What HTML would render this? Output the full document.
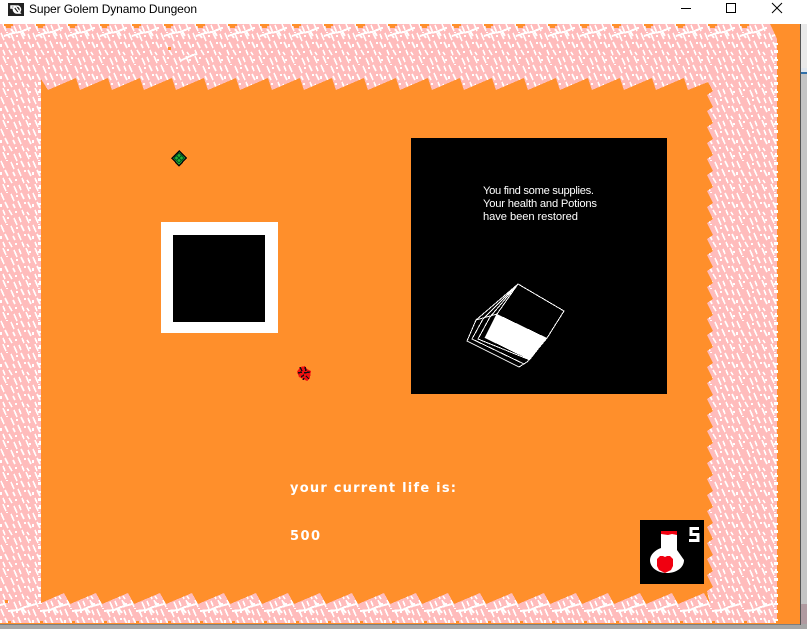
<!DOCTYPE html>
<html><head><meta charset="utf-8"><style>
html,body{margin:0;padding:0;background:#fff;width:807px;height:629px;overflow:hidden}
svg{display:block}
</style></head><body>
<svg width="807" height="629" viewBox="0 0 807 629" xmlns="http://www.w3.org/2000/svg">
<defs>
<pattern id="p" width="32" height="32" patternUnits="userSpaceOnUse" x="0" y="24">
<rect width="32" height="32" fill="#ffbcbc"/>
<path shape-rendering="crispEdges" stroke="#fff" stroke-width="1.6" fill="none" d="M3 0l3 7M8 1v2M14 2l3 7M19 1l2 5M26 0l3 7M30 3v2M1 9l3 7M7 8v1M11 10l3 7M17 11v2M21 9l3 6M28 10l2 5M5 18l3 6M1 20v3M13 20l2 4M18 17l3 7M25 18v2M28 18l3 6M3 26l2 5M9 26l3 5M16 27v2M22 26l2 5M27 28l2 3"/>
</pattern>
<pattern id="t" width="32" height="16" patternUnits="userSpaceOnUse" x="2" y="25">
<path shape-rendering="crispEdges" stroke="#fff" stroke-width="2" fill="none" d="M2 11l9 -3 7 -1 10 -4M12 8l-3 -4M20 6l3 5M6 10l2 3"/>
</pattern>
<pattern id="u" width="32" height="14" patternUnits="userSpaceOnUse" x="8" y="600">
<path shape-rendering="crispEdges" stroke="#fff" stroke-width="2" fill="none" d="M0 11l10 -1 7 -3 11 -3M14 8l4 5M22 5l-3 -3M6 10l-3 3"/>
</pattern>
<pattern id="e" width="8" height="16" patternUnits="userSpaceOnUse" x="0" y="24">
<path shape-rendering="crispEdges" fill="#fff" d="M0 3h8v2h-8zM0 10h8v3h-8z"/>
</pattern>
</defs>

<rect width="807" height="629" fill="#fff"/>
<rect x="801" y="24" width="6" height="44" fill="#e9e9e9"/>
<rect x="801" y="68" width="6" height="4" fill="#dfe6ee"/>
<rect x="801" y="72" width="6" height="2" fill="#2f6fa8"/>
<rect x="801" y="74" width="6" height="530" fill="#c4c4c4"/>
<rect x="801" y="604" width="6" height="25" fill="#b09aa0"/>
<rect x="0" y="624" width="807" height="5" fill="#a6a6a6"/>
<rect x="0" y="623" width="801" height="1.5" fill="#555"/>
<rect x="800" y="24" width="1" height="601" fill="#555"/>

<!-- title bar -->
<rect x="8" y="3" width="16" height="13" fill="#222"/>
<path d="M11 6h4l5 7h-3l-4 -5h-2zM17 6a3.500 3.500 0 1 1 -.1 0" fill="none" stroke="#fff" stroke-width="1.500"/>
<text x="29" y="13" font-family="'Liberation Sans',sans-serif" font-size="12" fill="#000" textLength="168" lengthAdjust="spacing">Super Golem Dynamo Dungeon</text>
<path d="M681 8.500h10" stroke="#000" fill="none"/>
<rect x="726.500" y="3.500" width="9" height="9" fill="none" stroke="#000"/>
<path d="M772 3l10 10M782 3l-10 10" stroke="#000" fill="none"/>

<!-- orange window background -->
<rect x="0" y="24" width="800" height="600" fill="#ff8f2b"/>

<!-- frame -->
<rect x="0" y="24" width="777" height="599" fill="url(#p)"/>
<rect x="0" y="25" width="777" height="16" fill="url(#t)"/>
<rect x="0" y="600" width="777" height="14" fill="url(#u)"/>
<rect x="774" y="40" width="4" height="583" fill="url(#e)"/>
<path d="M180 61l6 -3 7 -3 4 -1" stroke="#fff" stroke-width="2" fill="none" shape-rendering="crispEdges"/>

<!-- notches -->
<line x1="4" x2="777" y1="25" y2="25" stroke="#ff8f2b" stroke-width="2" stroke-dasharray="9 23" shape-rendering="crispEdges"/>
<line x1="6" x2="777" y1="27" y2="27" stroke="#ff8f2b" stroke-width="2" stroke-dasharray="5 27" shape-rendering="crispEdges"/>
<line x1="8" x2="777" y1="622" y2="622" stroke="#ff8f2b" stroke-width="2" stroke-dasharray="3 29" shape-rendering="crispEdges"/>
<path d="M770 24L778 41V24Z" fill="#ff8f2b"/>
<rect x="168" y="47" width="3" height="3" fill="#ff8f2b"/>
<rect x="5" y="600" width="3" height="3" fill="#ff8f2b"/>

<!-- interior -->
<rect x="38" y="80" width="4" height="524" fill="url(#e)"/>
<path fill="#ff8f2b" shape-rendering="crispEdges" d="M41 79L48 90
l28 -12 4 12 l28 -12 4 12 l28 -12 4 12 l28 -12 4 12 l28 -12 4 12 l28 -12 4 12 l28 -12 4 12 l28 -12 4 12 l28 -12 4 12 l28 -12 4 12
l28 -12 4 12 l28 -12 4 12 l28 -12 4 12 l28 -12 4 12 l28 -12 4 12 l28 -12 4 12 l28 -12 4 12 l28 -12 4 12 l28 -12 4 12 l28 -12 4 12
l20 -8 5 9
l-6 4 6 12 l-6 4 6 12 l-6 4 6 12 l-6 4 6 12 l-6 4 6 12 l-6 4 6 12 l-6 4 6 12 l-6 4 6 12 l-6 4 6 12 l-6 4 6 12
l-6 4 6 12 l-6 4 6 12 l-6 4 6 12 l-6 4 6 12 l-6 4 6 12 l-6 4 6 12 l-6 4 6 12 l-6 4 6 12 l-6 4 6 12 l-6 4 6 12
l-6 4 6 12 l-6 4 6 12 l-6 4 6 12 l-6 4 6 12 l-6 4 6 12 l-6 4 6 12 l-6 4 6 12 l-6 4 6 12 l-6 4 6 12 l-6 4 6 12 l-6 4 6 12
l-6 4 L710 604
l-6 -11 -26 11 l-6 -11 -26 11 l-6 -11 -26 11 l-6 -11 -26 11 l-6 -11 -26 11 l-6 -11 -26 11 l-6 -11 -26 11 l-6 -11 -26 11 l-6 -11 -26 11 l-6 -11 -26 11
l-6 -11 -26 11 l-6 -11 -26 11 l-6 -11 -26 11 l-6 -11 -26 11 l-6 -11 -26 11 l-6 -11 -26 11 l-6 -11 -26 11 l-6 -11 -26 11 l-6 -11 -26 11 l-6 -11 -26 11
l-6 -11 L41 603Z"/>

<!-- white square -->
<rect x="161" y="222" width="117" height="111" fill="#fff"/>
<rect x="173" y="235" width="92" height="87" fill="#000"/>

<!-- panel -->
<rect x="411" y="138" width="256" height="256" fill="#000"/>
<g font-family="'Liberation Sans',sans-serif" font-size="11.2" fill="#fff">
<text x="483" y="194" textLength="111" lengthAdjust="spacing">You find some supplies.</text>
<text x="483" y="207" textLength="114" lengthAdjust="spacing">Your health and Potions</text>
<text x="483" y="220" textLength="95" lengthAdjust="spacing">have been restored</text>
</g>
<polygon points="497,314 547,338 530,360 485,338" fill="#fff" shape-rendering="crispEdges"/>
<g fill="none" stroke="#fff" stroke-width="1" shape-rendering="crispEdges">
<path d="M518 284L564 311L547 338M518 284L476 320L467 341L519 367L527 362L547 338"/>
<path d="M518 284L483 319M518 284L490 317M518 284L497 314"/>
<path d="M483 319L472 339L524 364M490 317L478 339L530 360M497 314L485 338"/>
<path d="M476 320L497 314"/>
</g>

<!-- green enemy -->
<g shape-rendering="crispEdges">
<polygon points="179,150 187,158 179,167 171,158" fill="#0c0c0c"/>
<polygon points="179,152 185,158 179,165 173,158" fill="#22b033"/>
<path d="M176 155l6 6M174 158l5 5M179 153l5 5M182 155l-6 6M179 153l-5 5M184 158l-5 5" stroke="#052" stroke-width="1" fill="none"/>
<!-- red enemy -->
<polygon points="300,367 305,366 307,369 311,371 310,378 307,381 303,379 299,377 297,372" fill="#f01010"/>
<path d="M300 367l2 4M305 367l1 4M298 373l4 -1M304 373l6 -1M301 377l3 -2M306 376l3 3M303 380l1 -2" stroke="#111" stroke-width="1.400" fill="none"/>
</g>

<!-- life -->
<g font-family="'DejaVu Sans',sans-serif" font-size="13" font-weight="bold" fill="#fff">
<text x="290" y="492" textLength="166" lengthAdjust="spacing">your current life is:</text>
<text x="290" y="540" textLength="30" lengthAdjust="spacing">500</text>
</g>

<!-- potion -->
<rect x="640" y="520" width="64" height="64" fill="#000"/>
<path d="M661 532h16v18l7 10c0 8 -8 13 -17 13s-17 -5 -17 -13c0 -5 5 -10 11 -12z" fill="#fff"/>
<path d="M661 531h16v4l-5 -1 -4 1 -7 -1z" fill="#f00010"/>
<path d="M665 573l-6 -3 -2 -4v-7l3 -3h3l2 1 2 -1h3l3 3v7l-2 4z" fill="#f00010"/>
<path d="M699 528.500H691V534.500H698V540.500H689" fill="none" stroke="#fff" stroke-width="3" shape-rendering="crispEdges"/>
</svg>
</body></html>
